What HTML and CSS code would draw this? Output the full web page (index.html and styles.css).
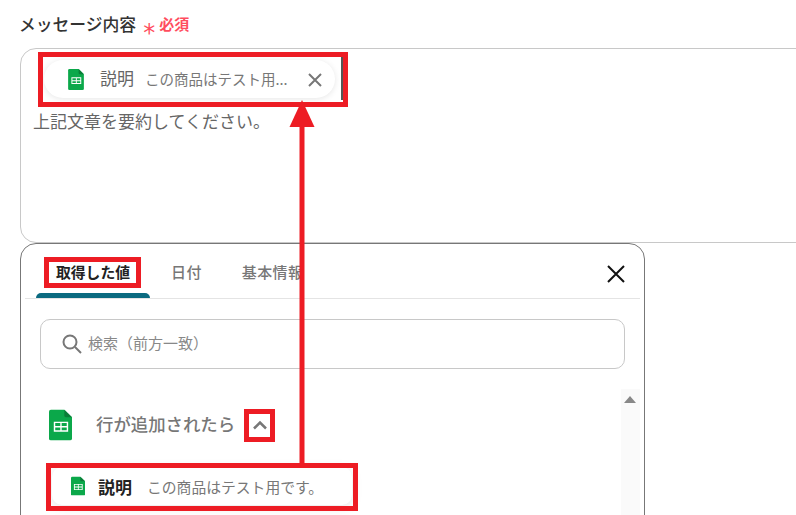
FILE: index.html
```html
<!DOCTYPE html>
<html lang="ja">
<head>
<meta charset="utf-8">
<title>メッセージ内容</title>
<link rel="stylesheet" href="styles.css">
</head>
<body>
<main class="page">
  <svg width="0" height="0" class="defs" aria-hidden="true">
    <symbol id="sheet" viewBox="0 0 24 32">
      <path d="M2 0H16L24 8V30a2 2 0 0 1-2 2H2a2 2 0 0 1-2-2V2a2 2 0 0 1 2-2z" fill="#0ba84a"/>
      <path d="M16 0L24 8H18a2 2 0 0 1-2-2z" fill="#0a7d38"/>
      <path d="M5 12.500H20V23H5zM6.500 14V17H11.800V14zM13.200 14V17H18.500V14zM6.500 18.500V21.500H11.800V18.500zM13.200 18.500V21.500H18.500V18.500z" fill="#fff" fill-rule="evenodd"/>
    </symbol>
  </svg>

  <div class="label-row">
    <span class="label">メッセージ内容</span>
    <span class="star">*</span>
    <span class="required">必須</span>
  </div>

  <div class="editor">
    <div class="chip-line">
      <div class="chip">
        <svg class="chip-icon"><use href="#sheet"/></svg>
        <span class="chip-name">説明</span>
        <span class="chip-value">この商品はテスト用...</span>
        <svg class="chip-close" viewBox="0 0 14 14"><path d="M1 1L13 13M13 1L1 13"/></svg>
      </div>
      <span class="caret"></span>
    </div>
    <p class="editor-text">上記文章を要約してください。</p>
  </div>

  <section class="panel">
    <div class="tabs">
      <span class="tab tab-active">取得した値</span>
      <span class="tab">日付</span>
      <span class="tab">基本情報</span>
      <svg class="panel-close" viewBox="0 0 18 18"><path d="M1 1L17 17M17 1L1 17"/></svg>
    </div>
    <div class="search">
      <svg class="search-icon" viewBox="0 0 20 20"><circle cx="8" cy="8" r="6.500"/><path d="M13 13L19 19"/></svg>
      <span class="search-text">検索（前方一致）</span>
    </div>
    <div class="list">
      <div class="list-body">
        <div class="group">
          <svg class="group-icon"><use href="#sheet"/></svg>
          <span class="group-name">行が追加されたら</span>
          <svg class="chevron" viewBox="0 0 16 10"><path d="M2 8.500L8 2.500L14 8.500"/></svg>
        </div>
        <div class="item">
          <svg class="item-icon"><use href="#sheet"/></svg>
          <span class="item-name">説明</span>
          <span class="item-value">この商品はテスト用です。</span>
        </div>
      </div>
      <div class="scrollbar"><span class="scroll-up"></span></div>
    </div>
  </section>

  <svg class="marks" viewBox="0 0 796 515" aria-hidden="true">
    <rect x="40.500" y="54.500" width="305" height="50"/>
    <rect x="46.500" y="259.500" width="92" height="26"/>
    <rect x="246.500" y="411.500" width="26" height="28"/>
    <rect x="48.500" y="465.500" width="307" height="43"/>
    <path class="shaft" d="M302 463V125"/>
    <path class="head" d="M302 100L314.500 127H289.500z"/>
  </svg>
</main>
</body>
</html>
```

FILE: styles.css
```css
* {
  box-sizing: border-box;
}

html,
body {
  margin: 0;
  padding: 0;
  background: #fff;
}

body {
  width: 796px;
  height: 515px;
  overflow: hidden;
  font-family: "Noto Sans CJK JP", "Noto Sans", sans-serif;
}

.page {
  position: relative;
  width: 796px;
  height: 515px;
  overflow: hidden;
  padding: 12px 0 0 20px;
}

.defs {
  position: absolute;
}

.label-row {
  display: flex;
  align-items: center;
  height: 24px;
}

.label {
  font-size: 16.800px;
  font-weight: 500;
  color: #333;
  line-height: 24px;
  margin-left: -1px;
}

.star {
  margin-left: 7px;
  width: 12px;
  height: 24px;
  font-family: "DejaVu Sans", sans-serif;
  font-size: 24px;
  line-height: 42px;
  font-weight: 400;
  color: #ff4d5e;
}

.required {
  margin-left: 4px;
  font-size: 15px;
  font-weight: 700;
  color: #ff4d5e;
  line-height: 24px;
}

.editor {
  margin-top: 12px;
  width: 810px;
  height: 195px;
  border: 1px solid #c8c8c8;
  border-radius: 16px;
  padding: 8px 0 0 13px;
}

.chip-line {
  display: flex;
  align-items: flex-start;
  margin-left: 10px;
}

.chip {
  display: flex;
  align-items: center;
  width: 291px;
  height: 38px;
  margin-top: 3px;
  padding-left: 24px;
  border-radius: 19px;
  background: #fff;
  box-shadow: 0 1px 6px rgba(0, 0, 0, 0.1);
}

.chip-icon {
  width: 16px;
  height: 21px;
}

.chip-name {
  margin: -2px 0 0 16px;
  font-size: 17px;
  color: #666;
  line-height: 24px;
}

.chip-value {
  margin: -1px 0 0 11px;
  font-size: 14.500px;
  color: #777;
  white-space: nowrap;
  line-height: 24px;
}

.chip-close {
  position: absolute;
  left: 308px;
  top: 73px;
  width: 14px;
  height: 14px;
  fill: none;
  stroke: #777;
  stroke-width: 2;
}

.caret {
  width: 2px;
  height: 43px;
  margin-left: 6px;
  background: #555;
}

.editor-text {
  margin: 8px 0 0 -1px;
  font-size: 17px;
  line-height: 26px;
  color: #666;
}

.panel {
  width: 625px;
  height: 320px;
  margin-top: 0;
  border: 1.500px solid #777;
  border-radius: 16px;
  background: #fff;
  padding: 0 4px;
  position: relative;
}

.tabs {
  display: flex;
  align-items: flex-start;
  height: 55px;
  padding-left: 11px;
  border-bottom: 1px solid #e4e4e4;
}

.tab {
  margin-top: 14px;
  font-size: 15px;
  font-weight: 500;
  line-height: 28px;
  color: #777;
  letter-spacing: 0.400px;
}

.tab:nth-child(2) {
  margin-left: 21px;
}

.tab:nth-child(3) {
  margin-left: 40px;
}

.tab-active {
  position: relative;
  width: 114px;
  height: 40px;
  padding-left: 20px;
  color: #222;
  font-size: 14.800px;
  font-weight: 700;
  letter-spacing: 0;
}

.tab-active::after {
  content: "";
  position: absolute;
  left: 0;
  right: 0;
  bottom: 0;
  height: 5px;
  background: #0b6a80;
  border-radius: 5px 5px 0 0;
}

.panel-close {
  position: absolute;
  left: 585.500px;
  top: 21px;
  width: 18px;
  height: 18px;
  fill: none;
  stroke: #111;
  stroke-width: 2;
}

.search {
  display: flex;
  align-items: center;
  width: 585px;
  height: 50px;
  margin: 20px 0 0 15px;
  padding-left: 21px;
  border: 1.500px solid #c8c8c8;
  border-radius: 10px;
}

.search-icon {
  width: 20px;
  height: 20px;
  margin-top: -1px;
  fill: none;
  stroke: #777;
  stroke-width: 2;
}

.search-text {
  margin: -3px 0 0 6px;
  font-size: 15px;
  color: #888;
}

.list {
  display: flex;
  justify-content: space-between;
  margin-top: 20px;
}

.list-body {
  padding-left: 24px;
}

.group {
  display: flex;
  align-items: center;
  height: 32px;
  margin-top: 20px;
}

.group-icon {
  width: 23px;
  height: 32px;
}

.group-name {
  margin: -3px 0 0 24px;
  font-size: 17.400px;
  font-weight: 500;
  color: #777;
}

.chevron {
  width: 16px;
  height: 10px;
  margin-left: 17px;
  fill: none;
  stroke: #777;
  stroke-width: 2.500;
}

.item {
  display: flex;
  align-items: center;
  width: 300px;
  height: 38px;
  margin: 26px 0 0 3px;
  padding-left: 19px;
  border-radius: 10px;
  background: #fff;
  box-shadow: 0 2px 12px rgba(0, 0, 0, 0.1);
}

.item-icon {
  width: 14px;
  height: 20px;
}

.item-name {
  margin-left: 13px;
  font-size: 17px;
  font-weight: 700;
  color: #222;
}

.item-value {
  margin-left: 15px;
  font-size: 14.800px;
  color: #777;
}

.scrollbar {
  width: 19px;
  height: 130px;
  padding: 7px 0 0 3px;
  background: #fafafa;
}

.scroll-up {
  display: block;
  width: 0;
  height: 0;
  border-left: 6.500px solid transparent;
  border-right: 6.500px solid transparent;
  border-bottom: 7px solid #888;
}

.marks {
  position: absolute;
  left: 0;
  top: 0;
  width: 796px;
  height: 515px;
  pointer-events: none;
}

.marks rect {
  fill: none;
  stroke: #ed1c24;
  stroke-width: 5;
}

.marks .shaft {
  fill: none;
  stroke: #ed1c24;
  stroke-width: 5;
}

.marks .head {
  fill: #ed1c24;
}
```
